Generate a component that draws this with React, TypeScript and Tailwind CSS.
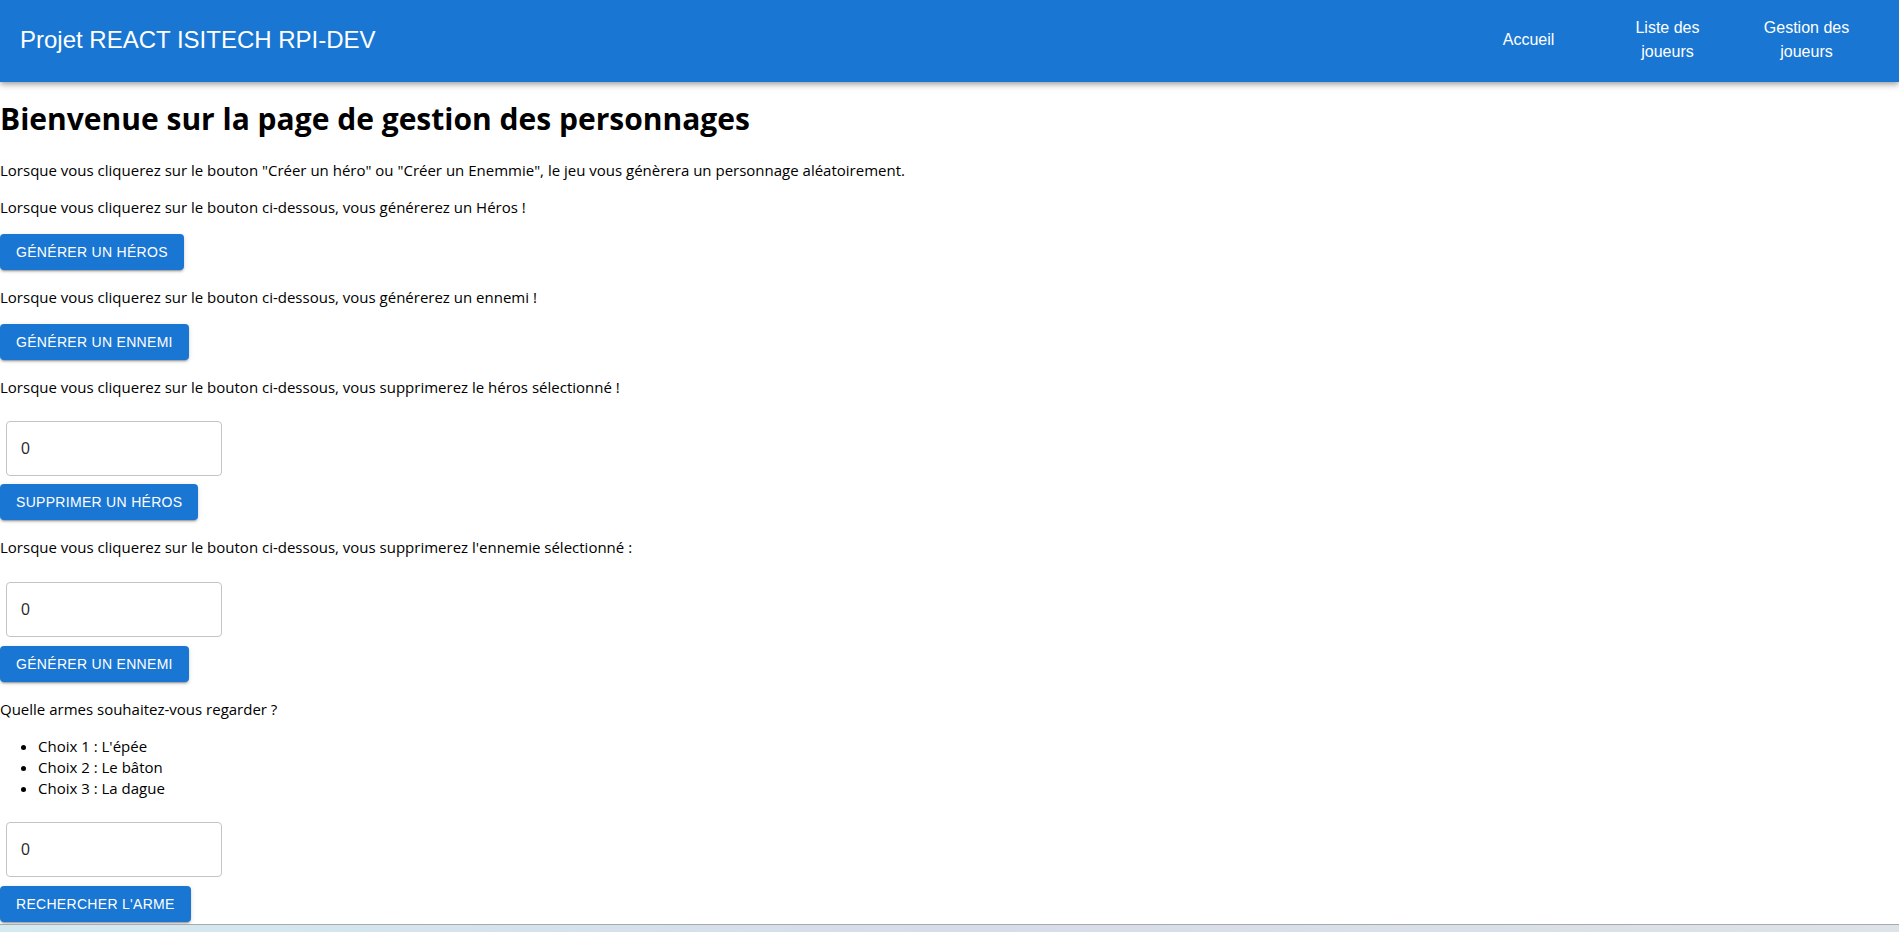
import React from 'react'

const navLinks = [
  { label: 'Accueil' },
  { label: 'Liste des joueurs' },
  { label: 'Gestion des joueurs' },
]

const armes = ["Choix 1 : L'épée", 'Choix 2 : Le bâton', 'Choix 3 : La dague']

// MUI-like contained button
const ActionButton: React.FC<{ label: string; className?: string }> = ({ label, className = '' }) => (
  <button
    type="button"
    className={`flex h-[36px] items-center rounded-[4px] bg-[#1976d2] px-[16px] font-['Liberation_Sans',Arial,sans-serif] text-[14px] leading-[24px] tracking-[0.3px] text-white uppercase shadow-[0_3px_1px_-2px_rgba(0,0,0,0.2),0_2px_2px_0_rgba(0,0,0,0.14),0_1px_5px_0_rgba(0,0,0,0.12)] ${className}`}
  >
    {label}
  </button>
)

const NumberField: React.FC<{ className?: string }> = ({ className = '' }) => (
  <div className={`ml-[6px] h-[55px] w-[216px] rounded-[4px] border border-[#c4c4c4] ${className}`}>
    <input
      type="number"
      defaultValue={0}
      className="h-full w-full bg-transparent px-[14px] font-['Liberation_Sans',Arial,sans-serif] text-[16px] text-black/85 outline-none [appearance:textfield]"
    />
  </div>
)

export default function App() {
  return (
    <div className="flex min-h-screen flex-col bg-white font-['Open_Sans',sans-serif] text-black">
      {/* App bar */}
      <header className="flex h-[82px] shrink-0 items-center bg-[#1976d2] pb-[3px] pl-[20px] pr-[35px] font-['Liberation_Sans',Arial,sans-serif] text-white shadow-[0_2px_4px_-1px_rgba(0,0,0,0.2),0_4px_5px_0_rgba(0,0,0,0.14),0_1px_10px_0_rgba(0,0,0,0.12)]">
        <h6 className="flex-1 text-[24px] leading-[32px]">Projet REACT ISITECH RPI-DEV</h6>
        <nav className="flex items-center gap-[24px]">
          {navLinks.map((link) => (
            <a key={link.label} href="#" className="w-[115px] px-2 text-center text-[16px] leading-[24px]">
              {link.label}
            </a>
          ))}
        </nav>
      </header>

      <main className="flex flex-col items-start">
        <h1 className="mt-[17px] text-[30px] leading-[40px] font-bold">
          Bienvenue sur la page de gestion des personnages
        </h1>

        <p className="mt-[21px] text-[15px] leading-[21px]">
          Lorsque vous cliquerez sur le bouton "Créer un héro" ou "Créer un Enemmie", le jeu vous génèrera un personnage
          aléatoirement.
        </p>

        <p className="mt-[16px] text-[15px] leading-[21px]">
          Lorsque vous cliquerez sur le bouton ci-dessous, vous générerez un Héros !
        </p>
        <ActionButton label="Générer un héros" className="mt-[16px]" />

        <p className="mt-[17px] text-[15px] leading-[21px]">
          Lorsque vous cliquerez sur le bouton ci-dessous, vous générerez un ennemi !
        </p>
        <ActionButton label="Générer un ennemi" className="mt-[16px]" />

        <p className="mt-[17px] text-[15px] leading-[21px]">
          Lorsque vous cliquerez sur le bouton ci-dessous, vous supprimerez le héros sélectionné !
        </p>
        <NumberField className="mt-[23px]" />
        <ActionButton label="Supprimer un héros" className="mt-[8px]" />

        <p className="mt-[17px] text-[15px] leading-[21px]">
          Lorsque vous cliquerez sur le bouton ci-dessous, vous supprimerez l'ennemie sélectionné :
        </p>
        <NumberField className="mt-[24px]" />
        <ActionButton label="Générer un ennemi" className="mt-[9px]" />

        <p className="mt-[17px] text-[15px] leading-[21px]">Quelle armes souhaitez-vous regarder ?</p>
        <ul className="mt-[16px] list-disc pl-[38px] text-[15px] leading-[21px]">
          {armes.map((arme) => (
            <li key={arme}>{arme}</li>
          ))}
        </ul>

        <NumberField className="mt-[23px]" />
        <ActionButton label="Rechercher l'arme" className="mt-[9px]" />
      </main>

      {/* bottom strip */}
      <div className="mt-[2px] h-[8px] shrink-0 border-t border-[#a7abb0] bg-gradient-to-r from-[#d3eaf0] via-[#d7dce9] to-[#dde3e6]" />
    </div>
  )
}
